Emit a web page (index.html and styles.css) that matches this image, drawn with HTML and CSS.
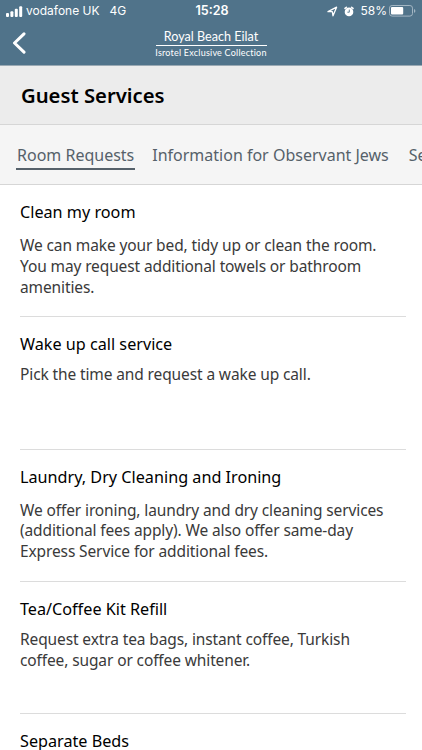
FILE: index.html
```html
<!DOCTYPE html>
<html lang="en">
<head>
    <meta charset="UTF-8">
    <meta name="viewport" content="width=device-width, initial-scale=1.0">
    <title>Guest Services</title>
    <link rel="stylesheet" href="styles.css">
</head>
<body>
    <header class="top">
        <div class="status-bar">
            <div class="status-left">
                <svg class="signal" width="17" height="11" viewBox="0 0 17 11" fill="#fff">
                    <rect x="0" y="7" width="3" height="4" rx="1"/>
                    <rect x="4.4" y="5.2" width="3" height="5.8" rx="1"/>
                    <rect x="8.8" y="2.8" width="3" height="8.2" rx="1"/>
                    <rect x="13.2" y="0.2" width="3" height="10.8" rx="1"/>
                </svg>
                <span class="carrier">vodafone UK</span>
                <span class="network">4G</span>
            </div>
            <span class="time">15:28</span>
            <div class="status-right">
                <svg class="location" width="11" height="11" viewBox="0 0 11 11" fill="none" stroke="#fff" stroke-width="1.3" stroke-linejoin="round">
                    <path d="M1 5.7L9.6 1.2L6 9.8L5.3 5.7Z"/>
                </svg>
                <svg class="alarm" width="10" height="11" viewBox="0 0 10 11">
                    <circle cx="5" cy="5.9" r="4.3" fill="#fff"/>
                    <path d="M1 2.4L2.4 1.2M9 2.4L7.6 1.2" stroke="#fff" stroke-width="1.5" stroke-linecap="round"/>
                    <path d="M5.3 3.6V6.2H3.4" fill="none" stroke="#50738a" stroke-width="0.9"/>
                </svg>
                <span class="percent">58%</span>
                <svg class="battery" width="27" height="12" viewBox="0 0 27 12">
                    <rect x="0.5" y="0.5" width="23" height="10.6" rx="2.6" fill="none" stroke="#a3b6c3"/>
                    <rect x="2" y="2" width="12.2" height="7.6" rx="1" fill="#fff"/>
                    <path d="M25 4V7.8Q26.4 7.3 26.4 5.9T25 4Z" fill="#a3b6c3"/>
                </svg>
            </div>
        </div>
        <div class="nav-bar">
            <a href="#" class="back">
                <svg width="15" height="22" viewBox="0 0 15 22" fill="none" stroke="#fff" stroke-width="3" stroke-linecap="round" stroke-linejoin="round">
                    <path d="M12 1.8L2.5 11L12 20.2"/>
                </svg>
            </a>
            <div class="logo">
                <span class="logo-name">Royal Beach Eilat</span>
                <span class="logo-sub">Isrotel Exclusive Collection</span>
            </div>
        </div>
    </header>

    <h1 class="page-title">Guest Services</h1>

    <nav class="tabs">
        <a href="#" class="tab active">Room Requests</a>
        <a href="#" class="tab">Information for Observant Jews</a>
        <a href="#" class="tab">Services</a>
    </nav>

    <main class="services">
        <section class="service long">
            <h2>Clean my room</h2>
            <p>We can make your bed, tidy up or clean the room. You may request additional towels or bathroom amenities.</p>
        </section>
        <section class="service">
            <h2>Wake up call service</h2>
            <p>Pick the time and request a wake up call.</p>
        </section>
        <section class="service long">
            <h2>Laundry, Dry Cleaning and Ironing</h2>
            <p>We offer ironing, laundry and dry cleaning services (additional fees apply). We also offer same-day Express Service for additional fees.</p>
        </section>
        <section class="service">
            <h2>Tea/Coffee Kit Refill</h2>
            <p>Request extra tea bags, instant coffee, Turkish coffee, sugar or coffee whitener.</p>
        </section>
        <section class="service">
            <h2>Separate Beds</h2>
        </section>
    </main>
</body>
</html>
```
FILE: styles.css
```css
* {
    box-sizing: border-box;
}
body {
    margin: 0;
    height: 750px;
    overflow: hidden;
    font-family: "Noto Sans", sans-serif;
    background-color: #fff;
    color: #000;
}
a {
    color: inherit;
    text-decoration: none;
}
svg {
    display: block;
}
.top {
    height: 66px;
    background-color: #50738a;
    border-bottom: 1px solid #9aa9b3;
    color: #fff;
}
.status-bar {
    display: grid;
    grid-template-columns: 1fr auto 1fr;
    align-items: center;
    height: 22px;
    padding: 0 6px;
    font-family: Inter, sans-serif;
    font-size: 12px;
    line-height: 22px;
}
.status-left,
.status-right {
    display: flex;
    align-items: center;
}
.status-right {
    justify-content: flex-end;
    padding-right: 1px;
    margin-right: -1px;
}
.carrier {
    margin-left: 3px;
}
.network {
    margin-left: 10px;
}
.time {
    padding-left: 2px;
    font-weight: 600;
    font-size: 12.6px;
}
.alarm {
    margin-left: 6px;
}
.percent {
    margin: 0 2px 0 6px;
}
.nav-bar {
    display: grid;
    grid-template-columns: 60px 1fr 60px;
    height: 43px;
}
.back {
    padding: 10px 0 0 12px;
}
.logo {
    display: flex;
    flex-direction: column;
    align-items: center;
    padding-top: 7px;
    font-family: Lato, sans-serif;
    white-space: nowrap;
}
.logo-name {
    width: 111px;
    border-bottom: 1px solid #fff;
    font-size: 12.6px;
    line-height: 16px;
    text-align: center;
}
.logo-sub {
    font-size: 9px;
    line-height: 14px;
    letter-spacing: 0.22px;
}
.page-title {
    margin: 0;
    height: 59px;
    padding-left: 21px;
    background-color: #ececec;
    border-bottom: 1px solid #d6d6d6;
    font-size: 20.25px;
    font-weight: 600;
    line-height: 59px;
}
.tabs {
    display: flex;
    gap: 16px;
    height: 60px;
    padding: 17px 0 0 16px;
    overflow: hidden;
    background-color: #f5f5f5;
    border-bottom: 1px solid #d6d6d6;
    color: #56616a;
    font-size: 16px;
    white-space: nowrap;
}
.tab {
    height: 28px;
    padding: 0 1px;
    line-height: 27px;
}
.tab:last-child {
    margin-left: 2px;
}
.tab.active {
    border-bottom: 2px solid #56616a;
}
.services {
    padding: 0 16px 0 20px;
}
.service {
    height: 132.3px;
    padding-top: 15px;
    border-bottom: 1px solid #dcdcdc;
}
.service:last-child {
    height: auto;
    border-bottom: none;
}
.service h2 {
    margin: 0;
    font-size: 16.2px;
    font-weight: 400;
    line-height: 24px;
}
.service p {
    margin: 8px 0 0;
    padding-right: 12px;
    color: #3a3a3a;
    font-size: 15.5px;
    letter-spacing: -0.12px;
    line-height: 20.8px;
}
.service.long p {
    margin-top: 11px;
}
```
